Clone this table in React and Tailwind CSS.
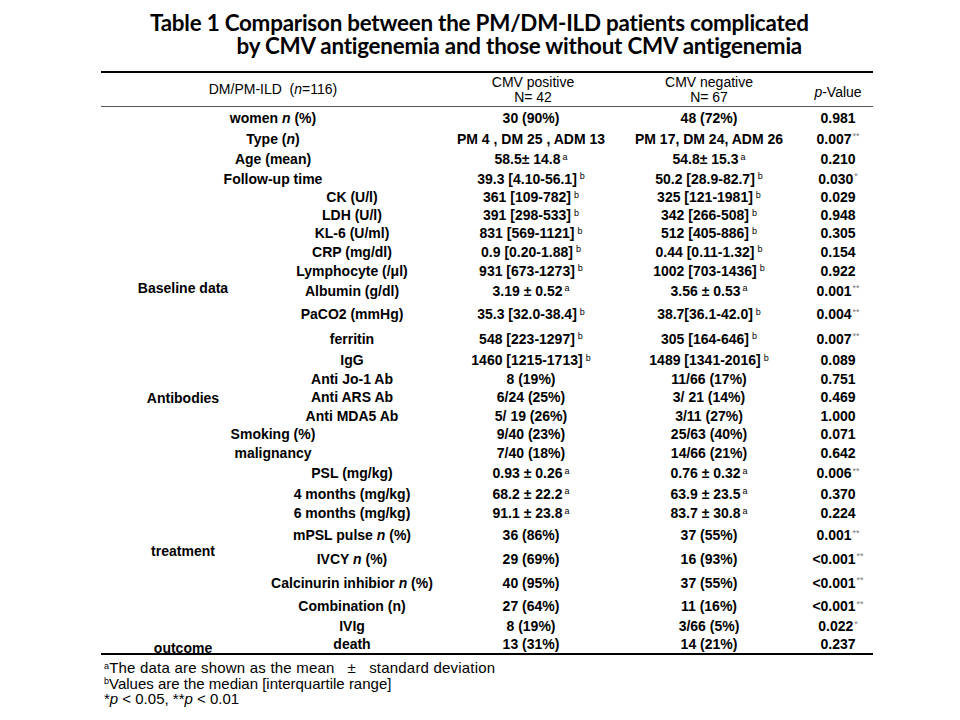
import React from "react";

// superscript helpers
const A = () => <sup className="text-[9px] font-normal ml-[2px]">a</sup>;
const B = () => <sup className="text-[9px] font-normal ml-[3px]">b</sup>;
const S = ({ children }) => (
  <sup className="text-[9px] font-normal text-[#777] ml-[1px]">{children}</sup>
);

const ROWS = [
  { wide: true, label: <>women <i>n</i> (%)</>, c: "30 (90%)", d: "48 (72%)", p: "0.981" },
  { wide: true, label: <>Type (<i>n</i>)</>, c: "PM 4 , DM 25 , ADM 13", d: "PM 17, DM 24, ADM 26", p: <>0.007<S>**</S></> },
  { wide: true, label: "Age (mean)", c: <>58.5± 14.8<A /></>, d: <>54.8± 15.3<A /></>, p: "0.210" },
  { wide: true, label: "Follow-up time", c: <>39.3 [4.10-56.1]<B /></>, d: <>50.2 [28.9-82.7]<B /></>, p: <>0.030<S>*</S></> },
  { empty: true, label: "CK (U/l)", c: <>361 [109-782]<B /></>, d: <>325 [121-1981]<B /></>, p: "0.029" },
  { cat: "Baseline data", catClass: "row-span-8", label: "LDH (U/l)", c: <>391 [298-533]<B /></>, d: <>342 [266-508]<B /></>, p: "0.948" },
  { label: "KL-6 (U/ml)", c: <>831 [569-1121]<B /></>, d: <>512 [405-886]<B /></>, p: "0.305" },
  { label: "CRP (mg/dl)", c: <>0.9 [0.20-1.88]<B /></>, d: <>0.44 [0.11-1.32]<B /></>, p: "0.154" },
  { label: "Lymphocyte (/μl)", c: <>931 [673-1273]<B /></>, d: <>1002 [703-1436]<B /></>, p: "0.922" },
  { label: "Albumin (g/dl)", c: <>3.19 ± 0.52<A /></>, d: <>3.56 ± 0.53<A /></>, p: <>0.001<S>**</S></> },
  { label: "PaCO2 (mmHg)", c: <>35.3 [32.0-38.4]<B /></>, d: <>38.7[36.1-42.0]<B /></>, p: <>0.004<S>**</S></> },
  { label: "ferritin", c: <>548 [223-1297]<B /></>, d: <>305 [164-646]<B /></>, p: <>0.007<S>**</S></> },
  { label: "IgG", c: <>1460 [1215-1713]<B /></>, d: <>1489 [1341-2016]<B /></>, p: "0.089" },
  { cat: "Antibodies", catClass: "row-span-3", label: "Anti Jo-1 Ab", c: "8 (19%)", d: "11/66 (17%)", p: "0.751" },
  { label: "Anti ARS Ab", c: "6/24 (25%)", d: "3/ 21 (14%)", p: "0.469" },
  { label: "Anti MDA5 Ab", c: "5/ 19 (26%)", d: "3/11 (27%)", p: "1.000" },
  { wide: true, label: "Smoking (%)", c: "9/40 (23%)", d: "25/63 (40%)", p: "0.071" },
  { wide: true, label: "malignancy", c: "7/40 (18%)", d: "14/66 (21%)", p: "0.642" },
  { empty: true, label: "PSL (mg/kg)", c: <>0.93 ± 0.26<A /></>, d: <>0.76 ± 0.32<A /></>, p: <>0.006<S>**</S></> },
  { cat: "treatment", catClass: "row-span-6", label: "4 months (mg/kg)", c: <>68.2 ± 22.2<A /></>, d: <>63.9 ± 23.5<A /></>, p: "0.370" },
  { label: "6 months (mg/kg)", c: <>91.1 ± 23.8<A /></>, d: <>83.7 ± 30.8<A /></>, p: "0.224" },
  { label: <>mPSL pulse <i>n</i> (%)</>, c: "36 (86%)", d: "37 (55%)", p: <>0.001<S>**</S></> },
  { label: <>IVCY <i>n</i> (%)</>, c: "29 (69%)", d: "16 (93%)", p: <>&lt;0.001<S>**</S></> },
  { label: <>Calcinurin inhibior <i>n</i> (%)</>, c: "40 (95%)", d: "37 (55%)", p: <>&lt;0.001<S>**</S></> },
  { label: "Combination (n)", c: "27 (64%)", d: "11 (16%)", p: <>&lt;0.001<S>**</S></> },
  { cat: "outcome", catClass: "row-span-2 items-end leading-[10px]", label: "IVIg", c: "8 (19%)", d: "3/66 (5%)", p: <>0.022<S>*</S></> },
  { label: "death", c: "13 (31%)", d: "14 (21%)", p: "0.237" },
];

function Cell({ className = "", children }) {
  return (
    <div className={"flex items-center justify-center whitespace-nowrap " + className}>
      <span>{children}</span>
    </div>
  );
}

export default function App() {
  return (
    <div className="w-[960px] h-[720px] bg-white text-black overflow-hidden pt-[11px]">
      <div className="ml-[150px] w-[662px] font-['Lato','Open_Sans',sans-serif] font-bold text-[22.4px] leading-[23px] tracking-[-0.01em]">
        <div className="whitespace-nowrap">
          Table 1 Comparison between the PM/DM-ILD patients complicated
        </div>
        <div className="whitespace-nowrap text-right pr-[10px]">
          by CMV antigenemia and those without CMV antigenemia
        </div>
      </div>

      <div className="ml-[101px] w-[772px] mt-[14px] font-['Liberation_Sans',Arial,sans-serif] text-[14px]">
        {/* header */}
        <div className="grid grid-cols-[164px_172px_192px_160px_84px] h-[36px] border-t-2 border-black border-b border-b-[#555] leading-[15px]">
          <Cell className="col-span-2 pl-2">
            DM/PM-ILD&nbsp; (<i>n</i>=116)
          </Cell>
          <Cell>
            <span className="block text-center">CMV positive</span>
            <span className="block text-center">N= 42</span>
          </Cell>
          <Cell>
            <span className="block text-center">CMV negative</span>
            <span className="block text-center">N= 67</span>
          </Cell>
          <Cell className="pl-[14px] pt-[5px]">
            <i>p</i>-Value
          </Cell>
        </div>

        {/* body */}
        <div className="grid grid-cols-[164px_172px_192px_160px_84px] grid-rows-[21px_21px_20px_19px_18px_18px_18px_19px_19px_21px_26px_23px_20px_18px_18px_19px_18px_19px_22px_19px_20px_24px_23px_25px_22px_18px_18px] font-bold leading-[18px] border-b-2 border-black">
          {ROWS.map((r, i) => (
            <React.Fragment key={i}>
              {r.wide ? (
                <Cell className="col-span-2 pl-2">{r.label}</Cell>
              ) : (
                <>
                  {r.empty && <div />}
                  {r.cat && <Cell className={r.catClass}>{r.cat}</Cell>}
                  <Cell className="pl-[2px]">{r.label}</Cell>
                </>
              )}
              <Cell className="pr-[4px]">{r.c}</Cell>
              <Cell>{r.d}</Cell>
              <Cell className="pl-[14px]">{r.p}</Cell>
            </React.Fragment>
          ))}
        </div>
      </div>

      <div className="ml-[104px] mt-[5px] font-['Liberation_Sans',Arial,sans-serif] text-[15px] leading-[15.5px]">
        <div className="tracking-[0.2px]">
          <sup className="text-[9px]">a</sup>The data are shown as the mean&nbsp;&nbsp; ±&nbsp;&nbsp; standard deviation
        </div>
        <div>
          <sup className="text-[9px]">b</sup>Values are the median [interquartile range]
        </div>
        <div>
          *<i>p</i> &lt; 0.05, **<i>p</i> &lt; 0.01
        </div>
      </div>
    </div>
  );
}
